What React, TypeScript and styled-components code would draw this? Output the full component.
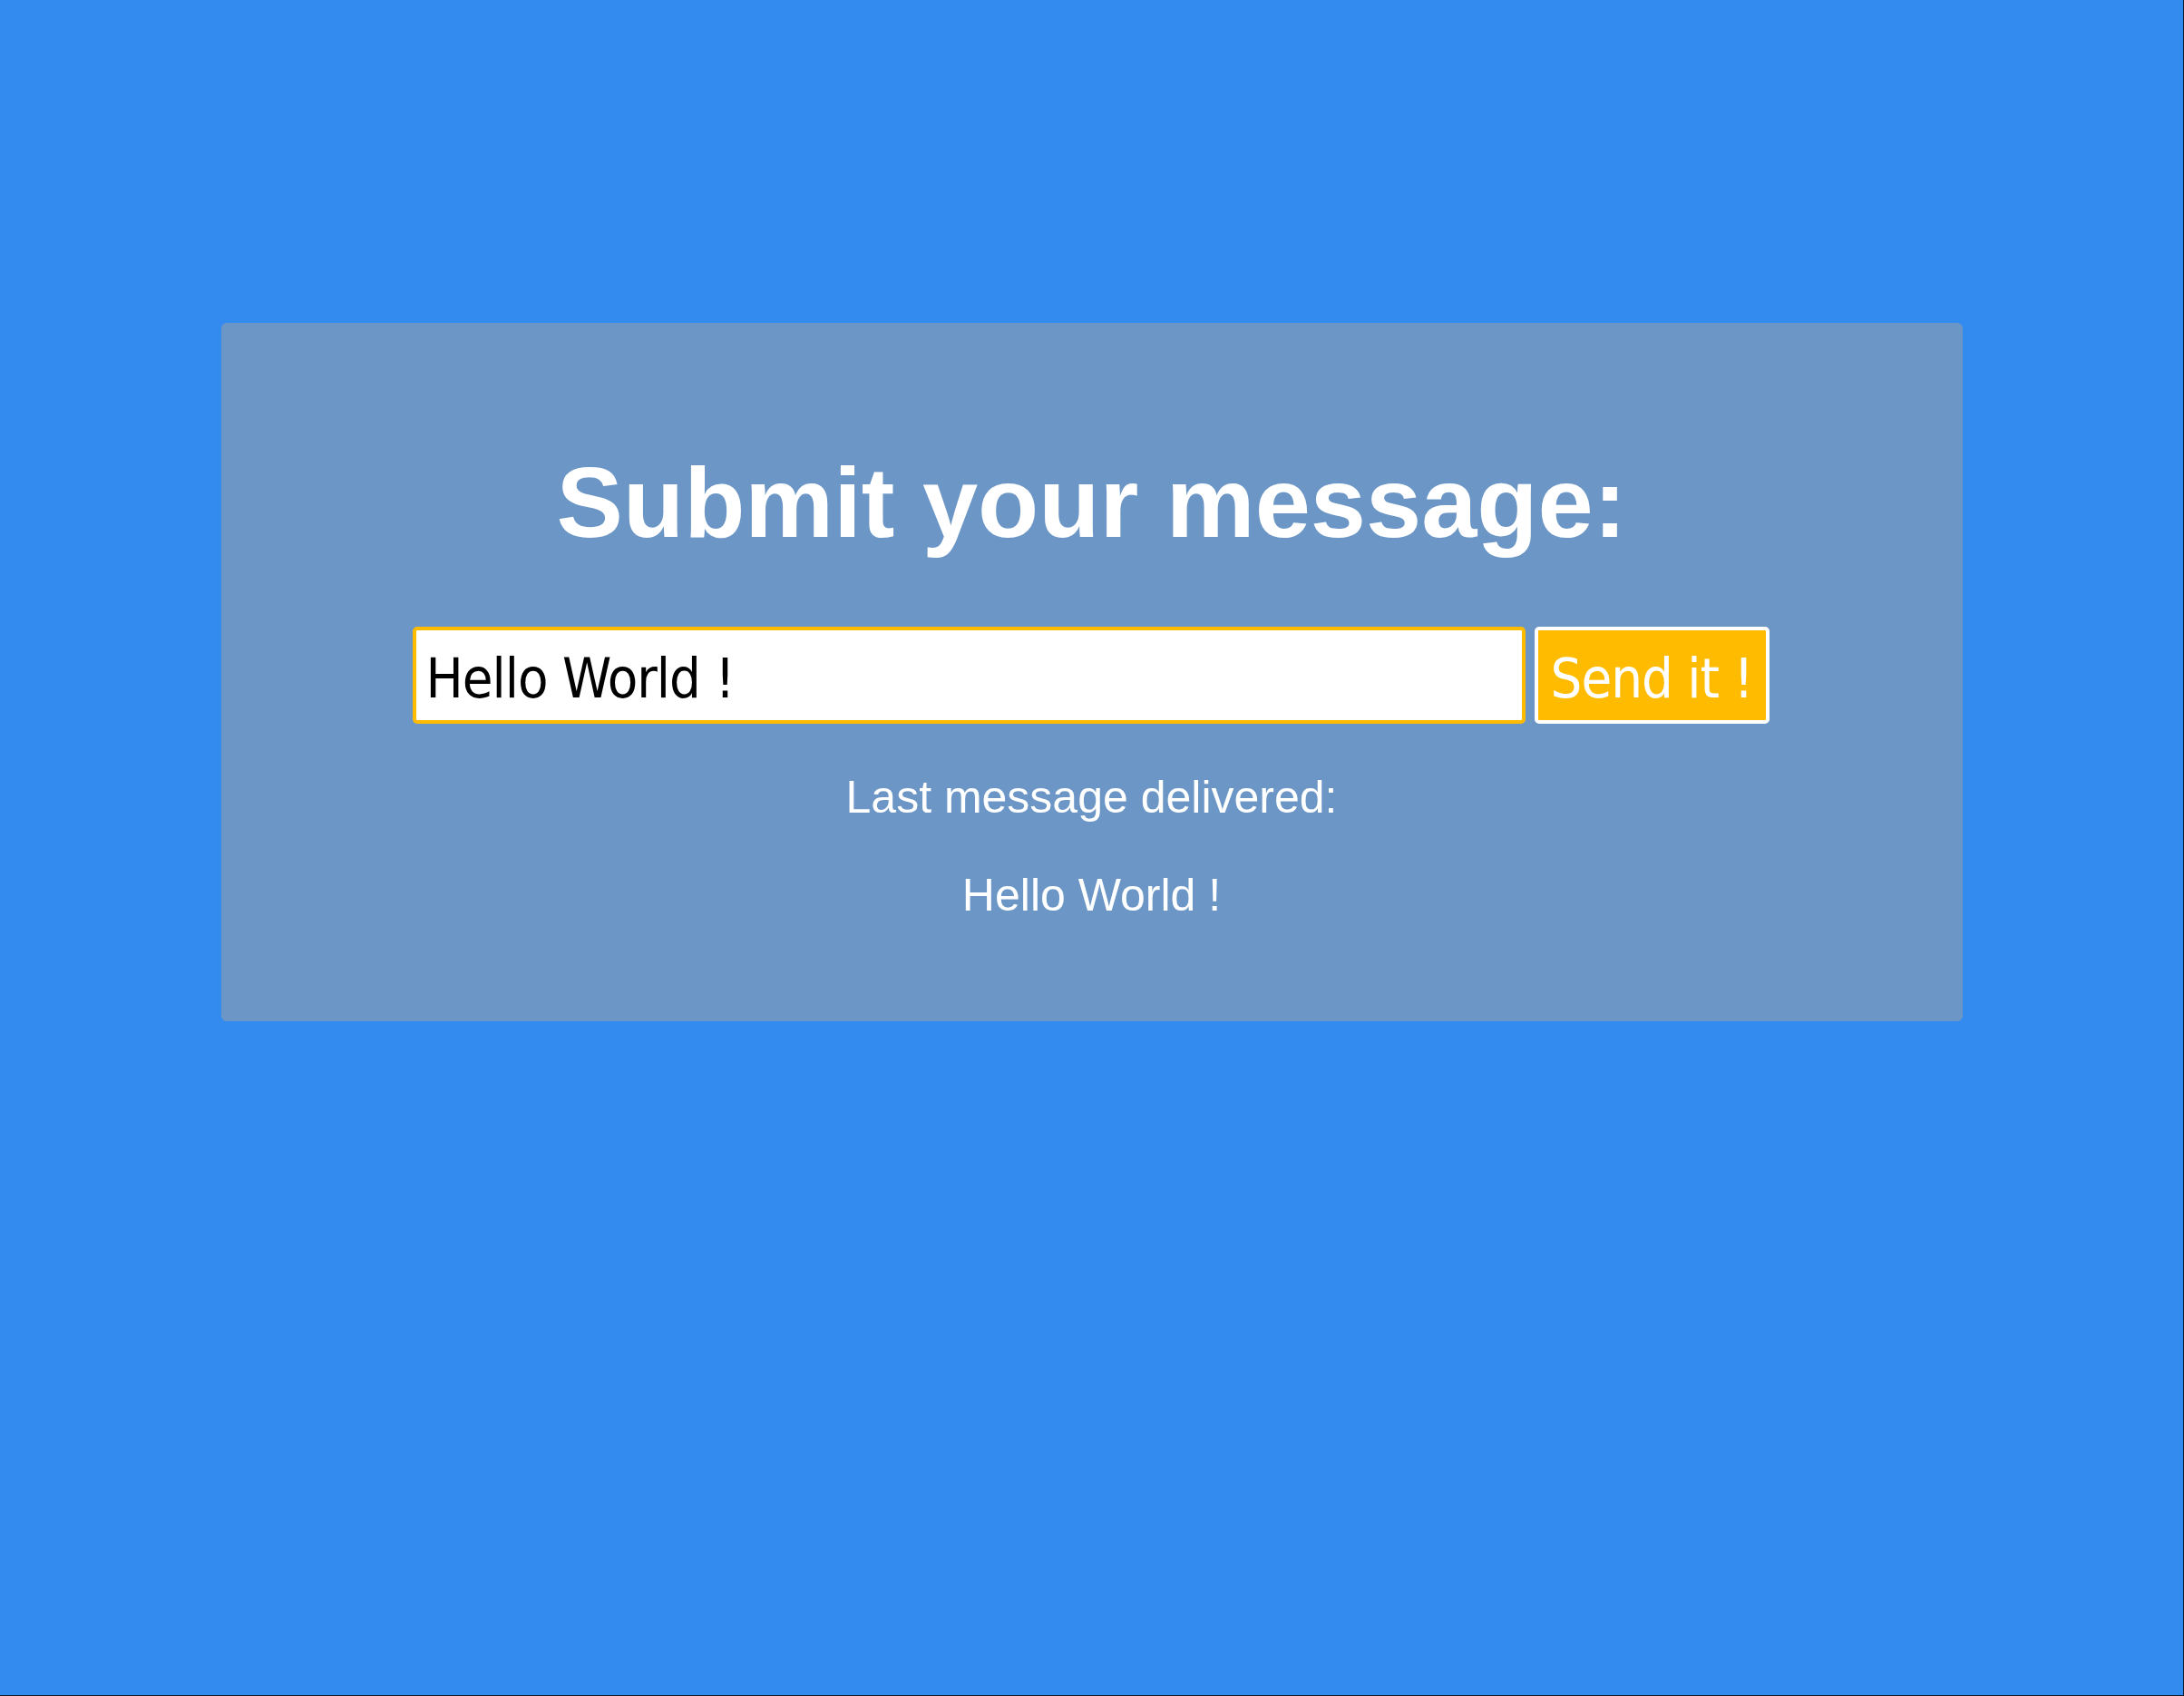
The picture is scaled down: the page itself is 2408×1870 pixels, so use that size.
import { FC, useState } from "react";
import styled, { createGlobalStyle } from "styled-components";

const GlobalStyle = createGlobalStyle`
    html, body {
        margin: 0;
        padding: 0;
        background: #348bef;
    }
    * {
        box-sizing: border-box;
    }
`

const Page = styled.div({
    minHeight: "100vh",
    background: "#348bef",
    paddingTop: 356,
    borderRight: "1px solid #0b1a2c",
    borderBottom: "1px solid #0b1a2c",
    fontFamily: "\"Liberation Sans\", Arial, sans-serif"
})

const Card = styled.section({
    width: 1920,
    margin: "0 auto",
    padding: "134px 0 110px",
    background: "#6b96c6",
    borderRadius: 6,
    display: "flex",
    flexDirection: "column",
    alignItems: "center",
    color: "#ffffff"
})

const Title = styled.h1({
    margin: "0 0 73px",
    fontSize: 110,
    lineHeight: "128px",
    fontWeight: 700,
    textAlign: "center"
})

const Form = styled.form({
    display: "flex",
    gap: 10,
    transform: "translateX(-1px)"
})

const formFont = "\"DejaVu Sans Condensed\", Tahoma, \"DejaVu Sans\", sans-serif"

const MessageInput = styled.input({
    width: 1227,
    height: 107,
    padding: "6px 11px 0",
    border: "4px solid #ffbb00",
    borderRadius: 5,
    background: "#ffffff",
    color: "#000000",
    fontFamily: formFont,
    fontSize: 61,
    letterSpacing: -1,
    outline: "none"
})

const SendButton = styled.button({
    width: 259,
    height: 107,
    padding: "6px 0 0",
    border: "4px solid #ffffff",
    borderRadius: 5,
    background: "#ffbb00",
    color: "#ffffff",
    fontFamily: formFont,
    fontSize: 61,
    letterSpacing: -1,
    cursor: "pointer"
})

type LineProps = { $gap: number }
const Line = styled.p<LineProps>(({ $gap }) => ({
    margin: `${$gap}px 0 0`,
    fontSize: 50,
    lineHeight: "57px",
    fontWeight: 400,
    textAlign: "center"
}))

const App: FC = () => {
    const [draft, setDraft] = useState("Hello World !")
    const [last, setLast] = useState("Hello World !")

    return (
        <Page>
            <GlobalStyle />
            <Card>
                <Title>Submit your message:</Title>
                <Form onSubmit={e => { e.preventDefault(); setLast(draft) }}>
                    <MessageInput value={draft} onChange={e => setDraft(e.target.value)} />
                    <SendButton type="submit">Send it !</SendButton>
                </Form>
                <Line $gap={53}>Last message delivered:</Line>
                <Line $gap={51}>{last}</Line>
            </Card>
        </Page>
    )
}

export default App
